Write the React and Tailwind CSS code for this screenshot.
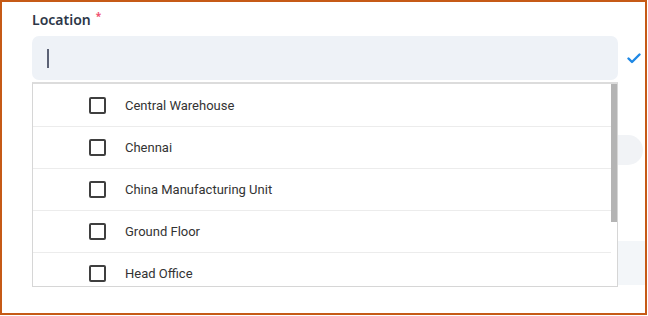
import React from 'react';

const locations = ['Central Warehouse', 'Chennai', 'China Manufacturing Unit', 'Ground Floor', 'Head Office'];

const App = () => {
  return (
    <div className="w-[648px] h-[316px] bg-white">
      <div className="relative w-[647px] h-[315px] border-2 border-[#c65a16] bg-white overflow-hidden">
        <div className="pl-[30px] pt-[7px]">
          <div className="h-[20px] flex items-center text-[14px] font-semibold text-[#2d3748] font-['Noto_Sans',sans-serif]">
            Location <span className="ml-[5px] text-[#f0506e] -mt-[5px] text-[10px] font-bold">*</span>
          </div>
          <div className="mt-[7px] flex items-center">
            <div className="w-[586px] h-[44px] rounded-[7px] bg-[#eef2f7] flex items-center pl-[15px]">
              <div className="w-[1.5px] h-[19px] bg-[#5b6275]" />
            </div>
            <svg width="14" height="11" viewBox="0 0 14 11" className="ml-[9px] mt-[1px]">
              <path d="M1.5 5.5 L5 9 L12.5 1.5" fill="none" stroke="#1e88e5" strokeWidth="2.4" strokeLinecap="round" strokeLinejoin="round" />
            </svg>
          </div>
          {/* page content hidden under the dropdown */}
          <div className="mt-[55px] ml-auto mr-[2px] w-[200px] h-[30px] rounded-full bg-[#f1f3f6]" />
          <div className="mt-[76px] h-[44px] w-[614px] bg-[#f3f6f9]" />
        </div>

        <div className="absolute left-[30px] top-[80px] w-[586px] h-[205px] bg-white border border-[#d6d6d6] border-t-2 border-t-[#dcdcdc] flex">
          <div className="flex-1 overflow-hidden pt-[1px]">
            {locations.map((loc) => (
              <div key={loc} className="h-[42px] shrink-0 flex items-center pl-[56px] border-b border-[#ececec]">
                <div className="w-[17px] h-[17px] border-2 border-[#3f3f3f] rounded-[2px]" />
                <span className="ml-[19px] text-[13px] text-[#333] font-['Roboto',sans-serif]">{loc}</span>
              </div>
            ))}
          </div>
          <div className="w-[6px] bg-white">
            <div className="h-[138px] bg-[#b4b4b4]" />
          </div>
        </div>
      </div>
    </div>
  );
};

export default App;
